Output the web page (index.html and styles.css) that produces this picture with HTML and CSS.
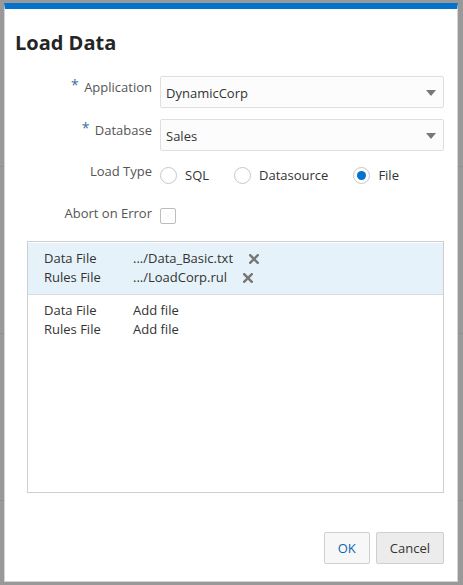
FILE: index.html
```html
<!DOCTYPE html>
<html>
<head>
<meta charset="utf-8">
<link rel="stylesheet" href="styles.css">
</head>
<body>
<div class="dialog">
  <h1 class="title">Load Data</h1>
  <div class="form">
    <div class="label"><span class="req">*</span> Application</div>
    <div class="select">DynamicCorp<span class="arrow"></span></div>

    <div class="label"><span class="req">*</span> Database</div>
    <div class="select">Sales<span class="arrow"></span></div>

    <div class="label label-radio">Load Type</div>
    <div class="radios">
      <label class="radio"><span class="circle"></span>SQL</label>
      <label class="radio"><span class="circle"></span>Datasource</label>
      <label class="radio"><span class="circle checked"></span>File</label>
    </div>

    <div class="label label-check">Abort on Error</div>
    <div class="check-wrap"><span class="checkbox"></span></div>
  </div>

  <div class="files">
    <div class="group selected">
      <div class="frow"><span class="fname">Data File</span><span class="fval">.../Data_Basic.txt</span><svg class="x" width="10" height="10" viewBox="0 0 10 10"><path d="M1.2 1.2 L8.8 8.8 M8.8 1.2 L1.2 8.8" stroke="#777" stroke-width="2.4" stroke-linecap="square"/></svg></div>
      <div class="frow"><span class="fname">Rules File</span><span class="fval">.../LoadCorp.rul</span><svg class="x" width="10" height="10" viewBox="0 0 10 10"><path d="M1.2 1.2 L8.8 8.8 M8.8 1.2 L1.2 8.8" stroke="#777" stroke-width="2.4" stroke-linecap="square"/></svg></div>
    </div>
    <div class="group">
      <div class="frow"><span class="fname">Data File</span><span class="fval">Add file</span></div>
      <div class="frow"><span class="fname">Rules File</span><span class="fval">Add file</span></div>
    </div>
  </div>

  <div class="footer">
    <button class="btn btn-ok">OK</button>
    <button class="btn btn-cancel">Cancel</button>
  </div>
</div>
</body>
</html>
```

FILE: styles.css
```css
html, body {
  margin: 0;
  padding: 0;
}
body {
  width: 463px;
  height: 585px;
  overflow: hidden;
  background-color: #999999;
  background-image: repeating-linear-gradient(to bottom, transparent 0, transparent 166px, #8f8f8f 166px, #8f8f8f 167px, transparent 167px);
  font-family: "Open Sans", "Noto Sans", sans-serif;
  font-size: 13px;
  color: #333;
}
.dialog {
  box-sizing: border-box;
  width: 454px;
  height: 579px;
  margin: 3px 0 0 4px;
  background: #fff;
  border: 1px solid #d4d4d4;
  border-top: 6px solid #0572ce;
  display: flex;
  flex-direction: column;
}
.title {
  margin: 0;
  padding: 20px 0 0 10px;
  font-size: 20px;
  font-weight: 700;
  line-height: 28px;
  color: #252525;
}
.form {
  margin-top: 19px;
  display: grid;
  grid-template-columns: 147px 1fr;
  column-gap: 8px;
  row-gap: 11px;
  padding-right: 13px;
}
.label {
  text-align: right;
  color: #555;
  line-height: 18px;
  padding-top: 2px;
  white-space: nowrap;
}
.req {
  color: #3b6ea0;
  font-size: 14px;
  position: relative;
  top: -2px;
  margin-right: 2px;
}
.select {
  position: relative;
  box-sizing: border-box;
  height: 32px;
  border: 1px solid #dfdfdf;
  border-radius: 2px;
  background: #fcfcfc;
  padding: 0 0 0 5px;
  line-height: 32px;
  color: #333;
}
.arrow {
  position: absolute;
  right: 7px;
  top: 13px;
  width: 0;
  height: 0;
  border-left: 5px solid transparent;
  border-right: 5px solid transparent;
  border-top: 6px solid #777;
}
.radios {
  display: flex;
  align-items: center;
  height: 26px;
}
.label-radio {
  padding-top: 0;
}
.radio {
  display: flex;
  align-items: center;
  color: #333;
  margin-right: 25px;
}
.circle {
  box-sizing: border-box;
  width: 17px;
  height: 17px;
  border: 1px solid #c8c8c8;
  border-radius: 50%;
  background: #fff;
  margin-right: 8px;
  position: relative;
}
.circle.checked::after {
  content: "";
  position: absolute;
  left: 3px;
  top: 3px;
  width: 9px;
  height: 9px;
  border-radius: 50%;
  background: #0572ce;
}
.label-check {
  padding-top: 5px;
}
.check-wrap {
  height: 25px;
}
.checkbox {
  display: block;
  box-sizing: border-box;
  width: 16px;
  height: 16px;
  margin-top: 9px;
  border: 1px solid #bdbdbd;
  border-radius: 2px;
  background: #fff;
}
.files {
  margin: 17px 13px 0 22px;
  height: 252px;
  box-sizing: border-box;
  border: 1px solid #cfcfcf;
  padding-top: 1px;
}
.group {
  padding: 6px 0 6px 16px;
}
.group.selected {
  background: #e6f2fa;
  border-bottom: 1px solid #d6dde3;
  padding-top: 6px;
  padding-bottom: 7px;
}
.frow {
  display: flex;
  align-items: center;
  line-height: 19px;
}
.fname {
  width: 89px;
  color: #333;
}
.fval {
  color: #333;
}
.x {
  margin-left: 16px;
}
.footer {
  margin-top: auto;
  display: flex;
  justify-content: flex-end;
  gap: 6px;
  padding: 0 13px 17px 0;
}
.btn {
  font-family: inherit;
  font-size: 13px;
  height: 32px;
  box-sizing: border-box;
  border: 1px solid #cfcfcf;
  border-radius: 2px;
  padding: 0 13px;
  line-height: 30px;
}
.btn-ok {
  background: #f7f7f7;
  color: #0a65b5;
}
.btn-cancel {
  background: #ececec;
  color: #333;
}
```
